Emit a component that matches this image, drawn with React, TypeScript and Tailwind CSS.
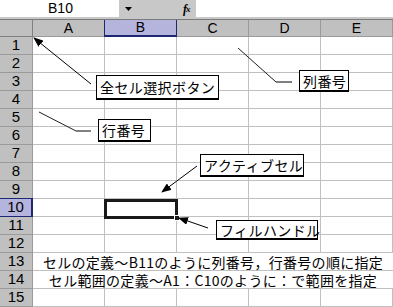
import React from 'react';

const cols = ['A', 'B', 'C', 'D', 'E'];
const rows = Array.from({ length: 15 }, (_, i) => i + 1);

const jp = "font-['MS_PGothic','Noto_Sans_CJK_JP',sans-serif]";

function Callout({ className, children }: { className: string; children: React.ReactNode }) {
  return (
    <div
      className={`absolute bg-white border border-black border-b-2 flex items-center pl-[3px] text-[14px] tracking-[0.4px] leading-none whitespace-nowrap text-black ${jp} ${className}`}
    >
      {children}
    </div>
  );
}

export default function App() {
  return (
    <div className="relative w-[393px] h-[307px] overflow-hidden bg-white font-['Liberation_Sans',Arial,sans-serif] text-black">
      {/* formula bar */}
      <div className="flex h-[20px] bg-[#c8c8c8] border-b border-[#7a7a7a]">
        <div className="w-[119px] h-[17px] bg-white flex items-center justify-center text-[14px] pl-[2px]">B10</div>
        <div className="w-[52px] h-[17px] flex items-center pl-[6px]">
          <svg width="7" height="4" viewBox="0 0 7 4">
            <path d="M0 0h7L3.5 4z" fill="#000" />
          </svg>
        </div>
        <div className="w-[25px] h-[17px] flex items-center pl-[12px] font-['Liberation_Serif',serif] italic text-[12px] font-bold">
          f<span className="text-[9px] -ml-[1px] mt-[3px]">x</span>
        </div>
        <div className="flex-1 h-[17px] bg-white" />
      </div>

      {/* sheet */}
      <div className="grid grid-cols-[33px_72px_72px_72px_72px_72px] grid-rows-[17px_repeat(15,18px)]">
        <div className="bg-[#c0c0c0] border-r border-b border-[#808080]" />
        {cols.map((c) => (
          <div
            key={c}
            className={
              c === 'B'
                ? 'bg-[#b4b4dc] border-x border-b-2 border-[#1c2874] -ml-px flex items-center justify-center text-[14px]'
                : 'bg-[#c0c0c0] border-r border-b border-[#9a9a9a] flex items-center justify-center text-[14px]'
            }
          >
            {c}
          </div>
        ))}
        {rows.map((r) => (
          <React.Fragment key={r}>
            <div
              className={
                r === 10
                  ? 'bg-[#b4b4dc] border-r-2 border-y border-[#1c2874] -mt-px h-[19px] flex items-center justify-center text-[15px]'
                  : 'bg-[#c0c0c0] border-r border-b border-[#9a9a9a] flex items-center justify-center text-[15px]'
              }
            >
              {r}
            </div>
            {r === 13 || r === 14 ? (
              <div
                className={`col-span-5 border-b border-[#c0c0c0] flex items-center justify-center text-[14px] leading-none tracking-[0.3px] whitespace-nowrap ${jp}`}
              >
                {r === 13
                  ? 'セルの定義～B11のように列番号，行番号の順に指定'
                  : 'セル範囲の定義～A1：C10のように：で範囲を指定'}
              </div>
            ) : (
              cols.map((c) => <div key={c} className="border-r border-b border-[#c0c0c0]" />)
            )}
          </React.Fragment>
        ))}
      </div>

      {/* active cell B10 and fill handle */}
      <div className="absolute left-[104px] top-[199px] w-[74px] h-[20px] border-[3px] border-[#1a1a1a]" />
      <div className="absolute left-[174px] top-[215px] w-[6px] h-[6px] bg-[#1a1a1a] border border-white" />

      {/* leader lines */}
      <svg className="absolute inset-0" width="393" height="307" viewBox="0 0 393 307">
        <defs>
          <marker id="ah" markerWidth="10" markerHeight="8" refX="9" refY="4" orient="auto" markerUnits="userSpaceOnUse">
            <path d="M0 0L10 4L0 8z" fill="#000" />
          </marker>
        </defs>
        <line x1="91" y1="84" x2="34" y2="38" stroke="#000" strokeWidth="1" markerEnd="url(#ah)" />
        <line x1="197" y1="166" x2="162" y2="192" stroke="#000" strokeWidth="1" markerEnd="url(#ah)" />
        <line x1="208" y1="228" x2="179" y2="218" stroke="#000" strokeWidth="1" markerEnd="url(#ah)" />
        <polyline points="238,48 276,82" fill="none" stroke="#202020" strokeWidth="1" />
        <line x1="276" y1="82" x2="292" y2="82" stroke="#808080" strokeWidth="2" />
        <polyline points="39,112 76,131" fill="none" stroke="#202020" strokeWidth="1" />
        <line x1="76" y1="131" x2="91" y2="131" stroke="#808080" strokeWidth="2" />
      </svg>

      <Callout className="left-[96px] top-[75px] w-[123px] h-[25px]">全セル選択ボタン</Callout>
      <Callout className="left-[299px] top-[70px] w-[50px] h-[22px]">列番号</Callout>
      <Callout className="left-[98px] top-[119px] w-[53px] h-[23px]">行番号</Callout>
      <Callout className="left-[200px] top-[154px] w-[104px] h-[23px]">アクティブセル</Callout>
      <Callout className="left-[216px] top-[220px] w-[102px] h-[20px]">フィルハンドル</Callout>
    </div>
  );
}
